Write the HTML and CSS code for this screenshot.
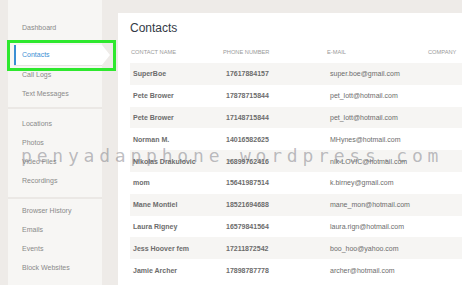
FILE: index.html
```html
<!DOCTYPE html>
<html>
<head>
<meta charset="utf-8">
<link rel="stylesheet" href="styles.css">
</head>
<body>
<div class="app">
  <aside class="sidebar">
    <div class="group g1">
      <div class="item">Dashboard</div>
      <div class="item active">Contacts</div>
      <div class="item">Call Logs</div>
      <div class="item">Text Messages</div>
    </div>
    <div class="group g2">
      <div class="item">Locations</div>
      <div class="item">Photos</div>
      <div class="item">Video Files</div>
      <div class="item">Recordings</div>
    </div>
    <div class="group g3">
      <div class="item">Browser History</div>
      <div class="item">Emails</div>
      <div class="item">Events</div>
      <div class="item">Block Websites</div>
    </div>
  </aside>
  <main class="main">
    <div class="panel">
      <h1 class="title">Contacts</h1>
      <div class="row head">
        <span class="c-name">CONTACT NAME</span>
        <span class="c-phone">PHONE NUMBER</span>
        <span class="c-mail">E-MAIL</span>
        <span class="c-comp">COMPANY</span>
      </div>
      <div class="row alt"><span class="c-name b">SuperBoe</span><span class="c-phone b">17617884157</span><span class="c-mail">super.boe@gmail.com</span></div>
      <div class="row"><span class="c-name b">Pete Brower</span><span class="c-phone b">17878715844</span><span class="c-mail">pet_lott@hotmail.com</span></div>
      <div class="row alt"><span class="c-name b">Pete Brower</span><span class="c-phone b">17148715844</span><span class="c-mail">pet_lott@hotmail.com</span></div>
      <div class="row"><span class="c-name b">Norman M.</span><span class="c-phone b">14016582625</span><span class="c-mail">MHynes@hotmail.com</span></div>
      <div class="row alt"><span class="c-name b">Nikolas Drakulovic</span><span class="c-phone b">16899762416</span><span class="c-mail">nik-LOVIC@hotmail.com</span></div>
      <div class="row"><span class="c-name b">mom</span><span class="c-phone b">15641987514</span><span class="c-mail">k.birney@gmail.com</span></div>
      <div class="row alt"><span class="c-name b">Mane Montiel</span><span class="c-phone b">18521694688</span><span class="c-mail">mane_mon@hotmail.com</span></div>
      <div class="row"><span class="c-name b">Laura Rigney</span><span class="c-phone b">16579841564</span><span class="c-mail">laura.rign@hotmail.com</span></div>
      <div class="row alt"><span class="c-name b">Jess Hoover fem</span><span class="c-phone b">17211872542</span><span class="c-mail">boo_hoo@yahoo.com</span></div>
      <div class="row"><span class="c-name b">Jamie Archer</span><span class="c-phone b">17898787778</span><span class="c-mail">archer@hotmail.com</span></div>
    </div>
  </main>
</div>
<div class="highlight"></div>
<div class="watermark">penyadapphone.wordpress.com</div>
</body>
</html>
```
FILE: styles.css
```css
html, body {
  margin: 0;
  padding: 0;
}
* {
  box-sizing: border-box;
}
body {
  width: 462px;
  height: 285px;
  overflow: hidden;
  background: #eeebe8;
  font-family: "Liberation Sans", Arial, sans-serif;
  position: relative;
}
.app {
  display: flex;
  height: 285px;
}
.sidebar {
  width: 94px;
  margin-left: 8px;
  display: flex;
  flex-direction: column;
  gap: 2px;
  background: #ebe8e5;
}
.group {
  background: #f7f6f4;
  display: flex;
  flex-direction: column;
}
.g1 { padding-top: 18px; height: 107px; }
.g2 { padding-top: 5px; height: 88px; }
.g3 { padding-top: 2px; flex: 1; }
.item {
  height: 19px;
  line-height: 19px;
  font-size: 7px;
  color: #8a8a8a;
  padding-left: 14px;
  flex: none;
}
.g1 .item.active {
  position: relative;
  margin: 8px 0 0 6px;
  height: 20px;
  line-height: 20px;
  padding-left: 8px;
  background: #ffffff;
  color: #3b8fd4;
  width: 88px;
  box-shadow: inset 2px 0 0 #3b8fd4, 0 1px 0 #e6e3e0;
}
.g1 .item.active::after {
  content: "";
  position: absolute;
  right: -8px;
  top: 0;
  border-left: 8px solid #ffffff;
  border-top: 10px solid transparent;
  border-bottom: 10px solid transparent;
}
.main {
  flex: 1;
  padding: 13px 0 0 16px;
  display: flex;
}
.panel {
  flex: 1;
  background: #ffffff;
  padding: 6px 0 0 12px;
}
.title {
  margin: 0;
  font-weight: normal;
  font-size: 12px;
  color: #333a45;
  height: 27px;
  line-height: 19px;
}
.row {
  display: flex;
  align-items: center;
  height: 21.8px;
  font-size: 7px;
  color: #6c6c6c;
}
.row.head {
  height: 17px;
  align-items: flex-start;
  padding-top: 3px;
  font-size: 5.7px;
  color: #9a9a9a;
}
.row.alt {
  background: #f6f5f3;
}
.c-name { width: 93px; padding-left: 3px; flex: none; }
.c-phone { width: 104px; padding-left: 3px; flex: none; }
.c-mail { width: 101px; padding-left: 3px; flex: none; }
.c-comp { flex: none; }
.head .c-name { padding-left: 1px; }
.head .c-phone { padding-left: 0; }
.head .c-mail { padding-left: 0; }
.b { font-weight: bold; }
.highlight {
  position: absolute;
  left: 7px;
  top: 40px;
  width: 109px;
  height: 31px;
  border: 3px solid #2ee82e;
}
.watermark {
  position: absolute;
  left: 21px;
  top: 145px;
  font-family: "DejaVu Sans Mono", monospace;
  font-size: 18px;
  line-height: 21px;
  letter-spacing: 4.8px;
  color: rgba(100, 100, 110, 0.42);
  white-space: nowrap;
}
```
